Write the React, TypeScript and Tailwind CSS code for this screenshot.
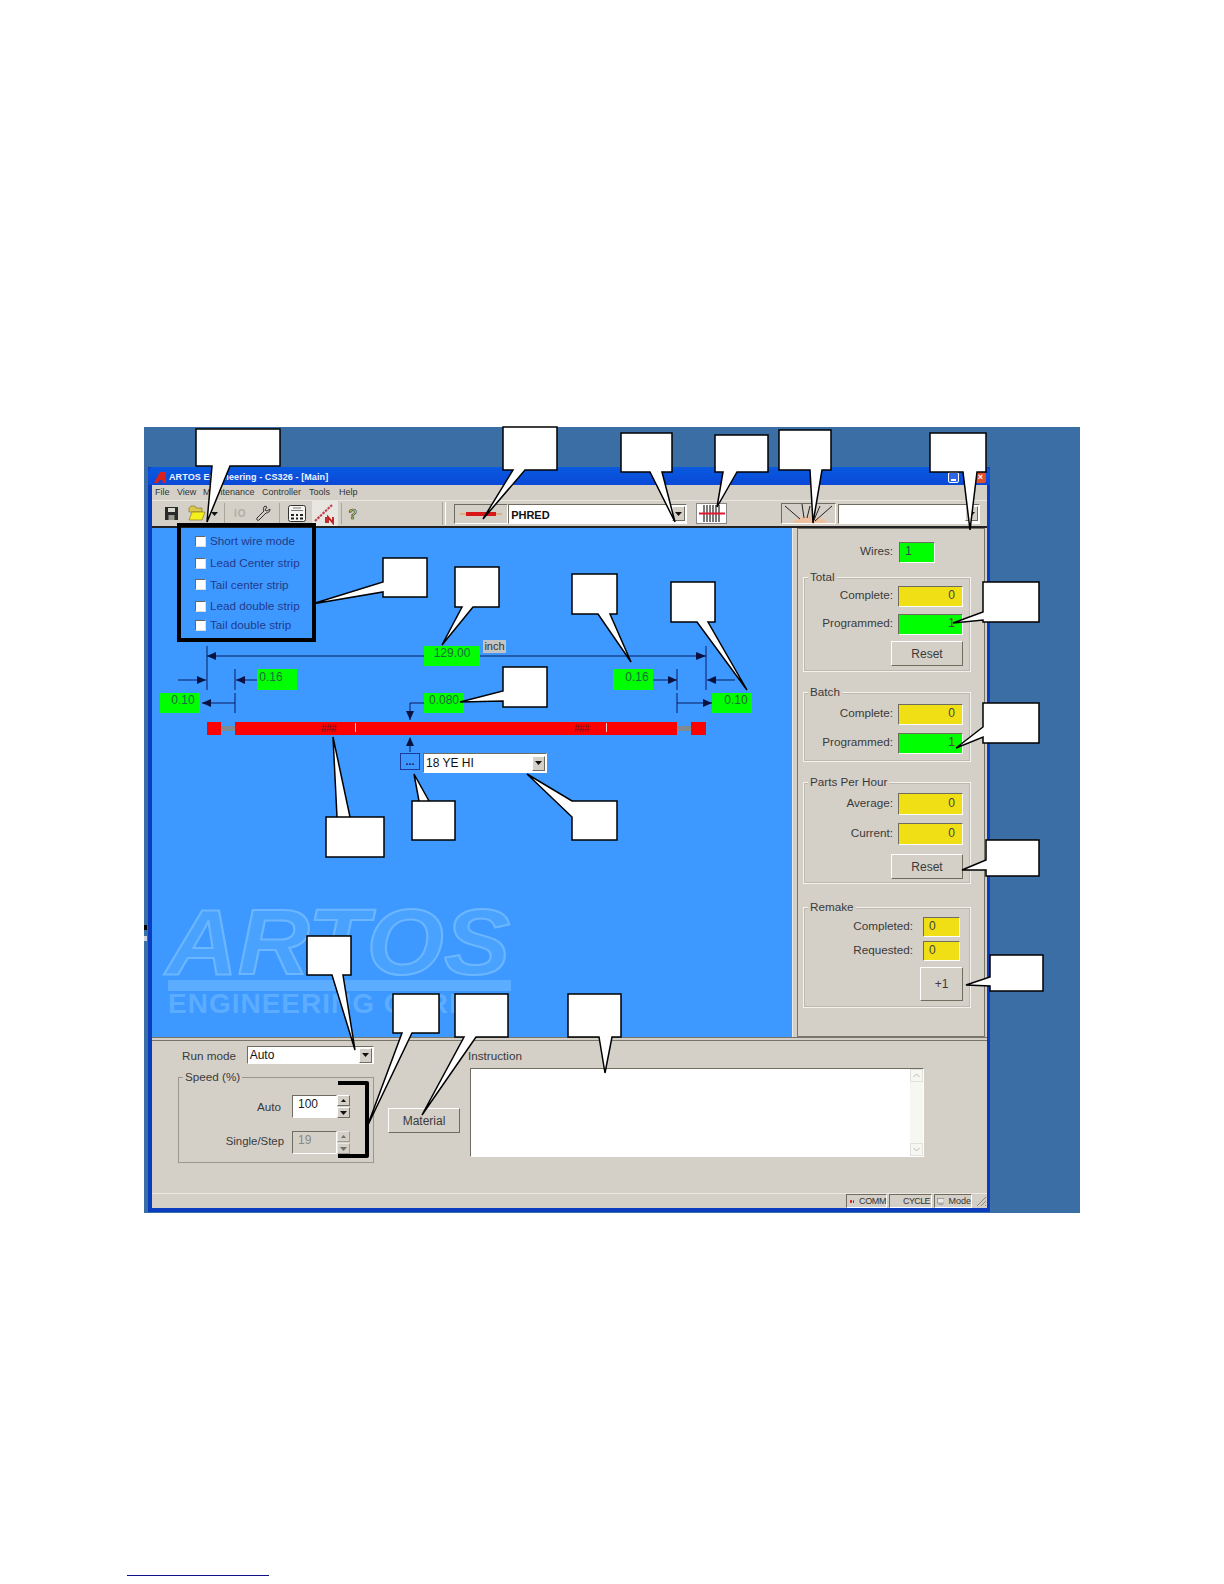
const sunken = "border border-t-[#6f6c60] border-l-[#6f6c60] border-b-white border-r-white";
const raised = "border border-t-white border-l-white border-b-[#6f6c60] border-r-[#6f6c60] bg-[#d4d0c8]";

const Arrow = () => (
  <svg width="7" height="4" viewBox="0 0 7 4">
    <path d="M0 0H7L3.5 4Z" fill="#111" />
  </svg>
);

const Combo = ({ text, cls, bold }: { text: string; cls: string; bold?: boolean }) => (
  <div className={`flex items-center bg-white ${sunken} ${cls}`}>
    <span className={`flex-1 pl-[2px] leading-none text-[#111] ${bold ? "pt-[3px] text-[11px] font-bold" : "text-[12px]"}`}>{text}</span>
    <div className={`mr-[1px] flex h-[15px] w-[13px] items-center justify-center ${raised}`}>
      <Arrow />
    </div>
  </div>
);

const Field = ({ value, color, cls }: { value: string; color: string; cls: string }) => (
  <div className={`flex items-center px-[5px] pb-[3px] text-[12px] leading-none text-[#444] ${sunken} ${color} ${cls}`}>{value}</div>
);

const Label = ({ text, cls }: { text: string; cls: string }) => (
  <span className={`pb-[3px] text-[11.7px] text-[#3a3a3a] ${cls}`}>{text}</span>
);

const Row = ({ label, value, color, cls }: { label: string; value: string; color: string; cls: string }) => (
  <div className={`flex items-center justify-end pr-[7px] ${cls}`}>
    <Label text={label} cls="mr-[5px]" />
    <Field value={value} color={color} cls="h-full w-[65px] justify-end pr-[7px]" />
  </div>
);

const Group = ({ title, cls, children }: { title: string; cls: string; children: React.ReactNode }) => (
  <div className={`relative ml-[5px] w-[168px] border border-[#f4f2ec] outline-1 -outline-offset-2 outline-[#bdb9ae] ${cls}`}>
    <span className="absolute left-[4px] top-[-9px] bg-[#d4d0c8] px-[2px] text-[11.7px] leading-[16px] text-[#3a3a3a]">{title}</span>
    {children}
  </div>
);

const Btn = ({ text, cls }: { text: string; cls: string }) => (
  <div className={`flex items-center justify-center text-[12px] text-[#3a3a3a] ${raised} ${cls}`}>{text}</div>
);

const Spin = ({ dim }: { dim?: boolean }) => (
  <div className={`flex h-full w-[13px] flex-col gap-[1px] ${dim ? "opacity-50" : ""}`}>
    <div className={`flex flex-1 items-center justify-center ${raised}`}>
      <svg width="5" height="3" viewBox="0 0 5 3"><path d="M0 3H5L2.5 0Z" fill="#111" /></svg>
    </div>
    <div className={`flex flex-1 items-center justify-center ${raised}`}>
      <Arrow />
    </div>
  </div>
);

const Green = ({ text, cls }: { text: string; cls: string }) => (
  <div className={`absolute flex items-center justify-center bg-[#00ff00] pb-[6px] text-[12px] leading-none text-[#1c6a3a] ${cls}`}>{text}</div>
);

const checks = [
  { label: "Short wire mode", h: "h-[22px]" },
  { label: "Lead Center strip", h: "h-[22px]" },
  { label: "Tail center strip", h: "h-[21px]" },
  { label: "Lead double strip", h: "h-[22px]" },
  { label: "Tail double strip", h: "h-[16px]" },
];

const callouts = [
  "M196 429H280V466H230L207 522L212 466H196Z",
  "M503 427H557V470H525L483 519L513 470H503Z",
  "M621 433H672V472H662L675 522L650 472H621Z",
  "M715 435H768V472H737L717 507L723 472H715Z",
  "M779 430H831V470H822L813 523L810 470H779Z",
  "M930 433H986V472H977L970 530L963 472H930Z",
  "M383 558H427V597H383V592L312 604L383 582Z",
  "M455 567H499V607H473L442 645L462 607H455Z",
  "M572 574H617V614H610L631 662L598 614H572Z",
  "M671 582H715V622H708L747 690L697 622H671Z",
  "M983 582H1039V622H983V620L953 623L983 612Z",
  "M983 703H1039V743H983V737L956 748L983 727Z",
  "M986 840H1039V876H986V870L962 870L986 860Z",
  "M990 955H1043V991H990V986L966 985L990 977Z",
  "M503 667H547V707H503V701L460 702L503 691Z",
  "M326 817H384V857H326V817H337L333 737L350 817Z",
  "M412 801H455V840H412V801H419L414 774L429 801Z",
  "M572 801H617V840H572V817L527 774L572 801Z",
  "M307 936H351V975H343L355 1050L332 975H307Z",
  "M393 994H439V1033H412L367 1127L402 1033H393Z",
  "M455 994H508V1037H476L422 1115L464 1037H455Z",
  "M568 994H621V1037H612L605 1073L599 1037H568Z",
];

export default function App() {
  return (
    <div className="relative h-[1584px] w-[1224px] overflow-hidden bg-white pl-[144px] pt-[427px] font-['Liberation_Sans',Arial,sans-serif]">
      {/* desktop */}
      <div className="h-[786px] w-[936px] bg-[#3b6ea5] pl-[4px] pt-[40px]">
        <div className="flex h-[745px] w-[842px] flex-col border-b-[4px] border-l-[4px] border-r-[3px] border-[#0a3cc0] bg-[#d4d0c8]">
          {/* title */}
          <div className="-ml-[4px] -mr-[3px] flex h-[18px] items-center rounded-t-[5px] bg-gradient-to-b from-[#0a5ae0] to-[#0a48d8] pl-[6px] pt-[3px]">
            <svg width="13" height="11" viewBox="0 0 13 11" className="mr-[2px]">
              <path d="M0 11L6 0H12V11H8.5V8H5.5L4 11Z" fill="#d8201c" />
            </svg>
            <span className="text-[9px] font-bold tracking-[0.1px] text-[#eef3ff]">ARTOS Engineering - CS326 - [Main]</span>
            <div className="ml-auto mr-[4px] flex gap-[16px]">
              <div className="flex h-[11px] w-[11px] items-end justify-center rounded-[2px] border border-white bg-[#2f66e8] pb-[1px]">
                <div className="h-[2px] w-[5px] bg-white" />
              </div>
              <div className="flex h-[11px] w-[11px] items-center justify-center rounded-[2px] bg-[#e0502c] text-[9px] font-bold leading-none text-white">×</div>
            </div>
          </div>
          {/* menu */}
          <div className="relative h-[16px] border-b border-[#e8e6df] text-[9px] leading-[15px] text-[#333]">
            <span className="absolute left-[3px]">File</span>
            <span className="absolute left-[25px]">View</span>
            <span className="absolute left-[51px]">Maintenance</span>
            <span className="absolute left-[110px]">Controller</span>
            <span className="absolute left-[157px]">Tools</span>
            <span className="absolute left-[187px]">Help</span>
          </div>
          {/* toolbar */}
          <div className="flex h-[27px] items-center border-b-2 border-[#222] pl-[13px]">
            <svg width="13" height="13" viewBox="0 0 13 13" className="mr-[10px]">
              <path d="M0 0H13V13H0Z" fill="#2a2a2a" />
              <path d="M3 1H10V5H3Z" fill="#d8d8d0" />
              <path d="M3.5 8H9.5V13H3.5Z" fill="#9a9a90" />
            </svg>
            <svg width="18" height="17" viewBox="0 0 18 17" className="mr-[5px]">
              <path d="M1 3L3 1H7L8 3H14V7H1Z" fill="#d9c84a" stroke="#8a7a20" strokeWidth="0.7" />
              <path d="M1 15L4 7H17L14 15Z" fill="#f4f020" stroke="#8a7a20" strokeWidth="0.7" />
            </svg>
            <Arrow />
            <div className="ml-[6px] mr-[9px] h-[21px] w-[1px] bg-[#a8a59a]" />
            <span className="mr-[8px] text-[10px] font-bold tracking-[1px] text-[#b0ada2]">IO</span>
            <svg width="16" height="17" viewBox="0 0 16 17" className="mr-[8px]">
              <path d="M10 1C8 2 8 5 9 6L2 13C1 15 3 16 4 15L11 8C13 8 15 7 15 4L12 6L10 5L12 2Z" fill="none" stroke="#333" strokeWidth="1" />
            </svg>
            <div className="mr-[8px] h-[21px] w-[1px] bg-[#a8a59a]" />
            <svg width="18" height="17" viewBox="0 0 18 17" className="mr-[6px]">
              <rect x="0.5" y="0.5" width="17" height="16" rx="2" fill="#f4f4f0" stroke="#333" />
              <path d="M5 3H13M3 5.5H15" stroke="#777" strokeWidth="1" />
              <path d="M3 10H6M8 10H10M12 10H15M3 13.5H6M8 13.5H10M12 13.5H15" stroke="#222" strokeWidth="1.8" />
            </svg>
            <div className="mr-[1px] flex h-[25px] w-[26px] items-center justify-center bg-[#e8e6e0]">
              <svg width="24" height="22" viewBox="0 0 24 22">
                <path d="M2 18L19 2" stroke="#c04050" strokeWidth="2.2" strokeDasharray="2.5 1" />
                <path d="M13 20V14M15 20V14L20 20V14" stroke="#c01818" strokeWidth="1.8" fill="none" />
              </svg>
            </div>
            <div className="ml-[2px] mr-[7px] h-[21px] w-[1px] bg-[#a8a59a]" />
            <span className="text-[14px] font-bold leading-none text-[#dcd86a] [-webkit-text-stroke:0.6px_#333]">?</span>
            <div className="ml-[85px] mr-[2px] h-[23px] w-[1px] bg-[#a8a59a]" />
            <div className="mr-[8px] h-[23px] w-[1px] bg-white" />
            <div className={`flex h-[20px] w-[54px] items-center justify-center ${sunken}`}>
              <svg width="42" height="6" viewBox="0 0 42 6">
                <path d="M0 3H42" stroke="#e89040" />
                <path d="M6 1H36V5H6Z" fill="#d81818" />
              </svg>
            </div>
            <Combo text="PHRED" bold cls="h-[20px] w-[179px]" />
            <div className="ml-[9px] flex h-[21px] w-[31px] items-center justify-center border border-[#888] bg-white">
              <svg width="26" height="17" viewBox="0 0 26 17">
                <path d="M5 0V17M8 0V17M11 0V17M14 0V17M17 0V17M20 0V17" stroke="#222" strokeWidth="1.2" />
                <path d="M0 8.5H26" stroke="#e01830" strokeWidth="2" />
              </svg>
            </div>
            <div className={`ml-[54px] h-[21px] w-[55px] overflow-hidden ${sunken}`}>
              <svg width="53" height="19" viewBox="0 0 53 19">
                <path d="M10 19C18 10 38 10 46 19Z" fill="#eec0a0" />
                <path d="M3 2L18 15M20 0L22 14M28 2L25 14M38 2L32 16M50 2L33 17" stroke="#222" />
              </svg>
            </div>
            <Combo text="" cls="ml-[2px] h-[20px] w-[142px]" />
          </div>
          {/* middle */}
          <div className="flex h-[509px]">
            <div className="relative w-[640px] bg-[#3d99ff]">
              {/* watermark logo */}
              <div className="absolute left-[14px] top-[376px] w-[345px] select-none">
                <div className="h-[76px] origin-left scale-x-[1.08] text-[92px] font-bold italic leading-[76px] text-[#4aa2ff] [-webkit-text-stroke:2px_#6cb6ff]">ARTOS</div>
                <div className="ml-[2px] h-[11px] bg-[#5cacff]" />
                <div className="mt-[1px] whitespace-nowrap pl-[2px] text-[28px] font-bold leading-[24px] tracking-[1px] text-[#5cacff]">ENGINEERING CORP</div>
              </div>
              {/* dimension lines */}
              <svg className="absolute inset-0" width="640" height="509" viewBox="152 528 640 509">
                <g stroke="#0a1a60" strokeWidth="1" fill="none">
                  <path d="M207 646V690M706 646V690M235 669V690M235 693V713M677 669V690M677 693V713" />
                  <path d="M207 656H706M178 680H206M236 680H257M653 680H677M707 680H735M202 703H235M677 703H712" />
                  <path d="M424 703H410V720M410 738V752" />
                </g>
                <g fill="#0a1240">
                  <path d="M207 656L216 652V660ZM706 656L696 652V660Z" />
                  <path d="M206 680L197 676V684ZM236 680L245 676V684ZM677 680L668 676V684ZM707 680L716 676V684Z" />
                  <path d="M202 703L211 699V707ZM712 703L703 699V707Z" />
                  <path d="M410 720L406 711H414ZM410 737L406 746H414Z" />
                </g>
              </svg>
              <Green text="129.00" cls="left-[272px] top-[118px] h-[20px] w-[56px]" />
              <div className="absolute left-[331px] top-[112px] flex h-[13px] w-[23px] items-center justify-center bg-[#c4c4c4] text-[11px] leading-none text-[#333]">inch</div>
              <Green text="0.16" cls="left-[105px] top-[141px] h-[21px] w-[40px] pr-[12px]" />
              <Green text="0.10" cls="left-[8px] top-[165px] h-[20px] w-[40px] pl-[6px]" />
              <Green text="0.080" cls="left-[272px] top-[165px] h-[20px] w-[40px]" />
              <Green text="0.16" cls="left-[461px] top-[141px] h-[21px] w-[40px] pl-[8px]" />
              <Green text="0.10" cls="left-[560px] top-[165px] h-[20px] w-[40px] pl-[8px]" />
              {/* wire */}
              <div className="absolute left-[55px] top-[194px] flex h-[13px] w-[499px] items-center">
                <div className="h-[13px] w-[14px] bg-[#ff0000]" />
                <div className="h-[5px] w-[14px] bg-[#808a90]" />
                <div className="relative h-[13px] w-[442px] bg-[#ff0000]">
                  <span className="absolute left-[86px] top-0 text-[10px] leading-[13px] tracking-[-0.5px] text-[#6a1020]">###</span>
                  <div className="absolute left-[120px] top-[1px] h-[9px] w-[1px] bg-[#ffd0d0]" />
                  <span className="absolute left-[339px] top-0 text-[10px] leading-[13px] tracking-[-0.5px] text-[#6a1020]">###</span>
                  <div className="absolute left-[371px] top-[1px] h-[9px] w-[1px] bg-[#ffd0d0]" />
                </div>
                <div className="h-[5px] w-[14px] bg-[#808a90]" />
                <div className="h-[13px] w-[15px] bg-[#ff0000]" />
              </div>
              <div className="absolute left-[248px] top-[225px] flex h-[17px] w-[20px] items-center justify-center border border-[#1a3a9a] text-[11px] font-bold leading-none text-[#10206a]">...</div>
              <Combo text="18 YE HI" cls="absolute left-[271px] top-[225px] h-[20px] w-[124px]" />
              {/* options */}
              <div className="absolute left-[43px] top-[2px] flex flex-col">
                {checks.map((c) => (
                  <div key={c.label} className={`flex items-center ${c.h}`}>
                    <div className="h-[11px] w-[11px] border border-t-[#666] border-l-[#666] border-b-[#ddd] border-r-[#ddd] bg-white" />
                    <span className="ml-[4px] text-[11.7px] leading-none text-[#233a8c]">{c.label}</span>
                  </div>
                ))}
              </div>
              <div className="absolute left-[25px] top-[-5px] h-[119px] w-[139px] border-[4px] border-black" />
            </div>
            <div className="w-[5px] border-l border-[#ece9e2]" />
            {/* right panel */}
            <div className="w-[188px] border border-[#77746a] pt-[13px]">
              <div className="flex h-[21px] items-center pl-[62px]">
                <Label text="Wires:" cls="mr-[6px]" />
                <Field value="1" color="bg-[#00ff00]" cls="h-full w-[36px]" />
              </div>
              <Group title="Total" cls="mt-[14px] h-[95px] pt-[8px]">
                <Row label="Complete:" value="0" color="bg-[#efdf14]" cls="h-[21px]" />
                <Row label="Programmed:" value="1" color="bg-[#00ff00]" cls="mt-[7px] h-[21px]" />
                <div className="mt-[6px] flex justify-end pr-[7px]"><Btn text="Reset" cls="h-[25px] w-[72px]" /></div>
              </Group>
              <Group title="Batch" cls="mt-[20px] h-[70px] pt-[11px]">
                <Row label="Complete:" value="0" color="bg-[#efdf14]" cls="h-[21px]" />
                <Row label="Programmed:" value="1" color="bg-[#00ff00]" cls="mt-[8px] h-[21px]" />
              </Group>
              <Group title="Parts Per Hour" cls="mt-[20px] h-[102px] pt-[10px]">
                <Row label="Average:" value="0" color="bg-[#efdf14]" cls="h-[22px]" />
                <Row label="Current:" value="0" color="bg-[#efdf14]" cls="mt-[8px] h-[22px]" />
                <div className="mt-[9px] flex justify-end pr-[7px]"><Btn text="Reset" cls="h-[25px] w-[72px]" /></div>
              </Group>
              <Group title="Remake" cls="mt-[23px] h-[101px] pt-[9px]">
                <div className="flex h-[20px] items-center justify-end pr-[10px]">
                  <Label text="Completed:" cls="mr-[10px]" />
                  <Field value="0" color="bg-[#efdf14]" cls="h-full w-[37px]" />
                </div>
                <div className="mt-[4px] flex h-[20px] items-center justify-end pr-[10px]">
                  <Label text="Requested:" cls="mr-[10px]" />
                  <Field value="0" color="bg-[#efdf14]" cls="h-full w-[37px]" />
                </div>
                <div className="mt-[6px] flex justify-end pr-[7px]"><Btn text="+1" cls="h-[34px] w-[43px]" /></div>
              </Group>
            </div>
          </div>
          {/* bottom panel */}
          <div className="flex h-[156px] border-t-[4px] border-[#77746a] [border-top-style:double]">
            <div className="w-[222px] shrink-0 pl-[26px] pt-[5px]">
              <div className="flex h-[18px] items-center">
                <span className="ml-[4px] w-[65px] pt-[1px] text-[11.7px] text-[#3a3a3a]">Run mode</span>
                <Combo text="Auto" cls="h-[18px] w-[128px]" />
              </div>
              <div className="relative mt-[13px] h-[86px] w-[196px] border border-[#9a978c] pt-[17px]">
                <span className="absolute left-[4px] top-[-9px] bg-[#d4d0c8] px-[2px] text-[11.7px] leading-[16px] text-[#3a3a3a]">Speed (%)</span>
                <div className="flex h-[23px] items-center">
                  <span className="w-[102px] text-right text-[11.7px] text-[#3a3a3a]">Auto</span>
                  <div className={`ml-[11px] flex h-full w-[45px] items-center bg-white pb-[5px] pl-[5px] text-[12px] leading-none text-[#222] ${sunken}`}>100</div>
                  <Spin />
                </div>
                <div className="mt-[13px] flex h-[23px] items-center">
                  <span className="w-[105px] pb-[2px] text-right text-[11.4px] text-[#3a3a3a]">Single/Step</span>
                  <div className={`ml-[8px] flex h-full w-[45px] items-center pb-[5px] pl-[5px] text-[12px] leading-none text-[#8a8a84] ${sunken}`}>19</div>
                  <Spin dim />
                </div>
              </div>
            </div>
            <Btn text="Material" cls="ml-[14px] mt-[67px] h-[25px] w-[72px]" />
            <div className="ml-[8px] pt-[8px]">
              <div className="h-[14px] text-[11.7px] leading-[14px] text-[#3a3a3a]">Instruction</div>
              <div className={`ml-[2px] mt-[5px] flex h-[89px] w-[454px] justify-end bg-white ${sunken}`}>
                <div className="flex w-[13px] flex-col justify-between bg-[#f6f6f0] opacity-80">
                  <div className="flex h-[13px] items-center justify-center border border-[#dcdcd4]">
                    <svg width="7" height="5" viewBox="0 0 7 5"><path d="M0.5 4L3.5 1L6.5 4" fill="none" stroke="#a8a89c" /></svg>
                  </div>
                  <div className="flex h-[13px] items-center justify-center border border-[#dcdcd4]">
                    <svg width="7" height="5" viewBox="0 0 7 5"><path d="M0.5 1L3.5 4L6.5 1" fill="none" stroke="#a8a89c" /></svg>
                  </div>
                </div>
              </div>
            </div>
          </div>
          {/* status */}
          <div className="flex h-[15px] items-center justify-end border-t border-[#ece9e2] text-[9px] leading-none text-[#333]">
            <div className={`flex h-[14px] w-[41px] items-center gap-[1px] pl-[3px] ${sunken}`}>
              <div className="h-[3px] w-[3px] rounded-full bg-[#e01010]" />
              <div className="h-[3px] w-[3px] rounded-full bg-[#e01010]" />
              <span className="ml-[4px] tracking-[-0.4px]">COMM</span>
            </div>
            <div className={`ml-[2px] flex h-[14px] w-[43px] items-center justify-end pr-[1px] tracking-[-0.6px] ${sunken}`}>CYCLE</div>
            <div className={`ml-[2px] flex h-[14px] w-[38px] items-center pl-[2px] ${sunken}`}>
              <svg width="10" height="9" viewBox="0 0 10 9" className="mr-[4px]">
                <rect x="0.5" y="0.5" width="9" height="6" fill="#e8e8e8" stroke="#8a8a8a" />
                <path d="M2 8.5H8" stroke="#8a8a8a" />
              </svg>
              Mode
            </div>
            <svg width="12" height="12" viewBox="0 0 12 12" className="ml-[3px]">
              <path d="M11 2L2 11M11 6L6 11M11 10L10 11" stroke="#8a877c" />
            </svg>
          </div>
        </div>
      </div>
      {/* bit of stray capture at the left edge */}
      <div className="absolute left-[144px] top-[925px] h-[5px] w-[3px] bg-black" />
      <div className="absolute left-[144px] top-[936px] h-[5px] w-[3px] bg-[#cfd6dd]" />
      {/* link underline in the page foot */}
      <div className="absolute bottom-[8px] left-[127px] h-[1px] w-[142px] bg-[#10108a]" />
      {/* callouts */}
      <svg className="pointer-events-none absolute inset-0" width="1224" height="1584" viewBox="0 0 1224 1584">
        <path d="M338 1083H367V1156H338" fill="none" stroke="#000" strokeWidth="4" strokeLinejoin="round" />
        {callouts.map((d) => (
          <path key={d} d={d} fill="#fff" stroke="#000" strokeWidth="1.5" strokeLinejoin="miter" />
        ))}
      </svg>
    </div>
  );
}
